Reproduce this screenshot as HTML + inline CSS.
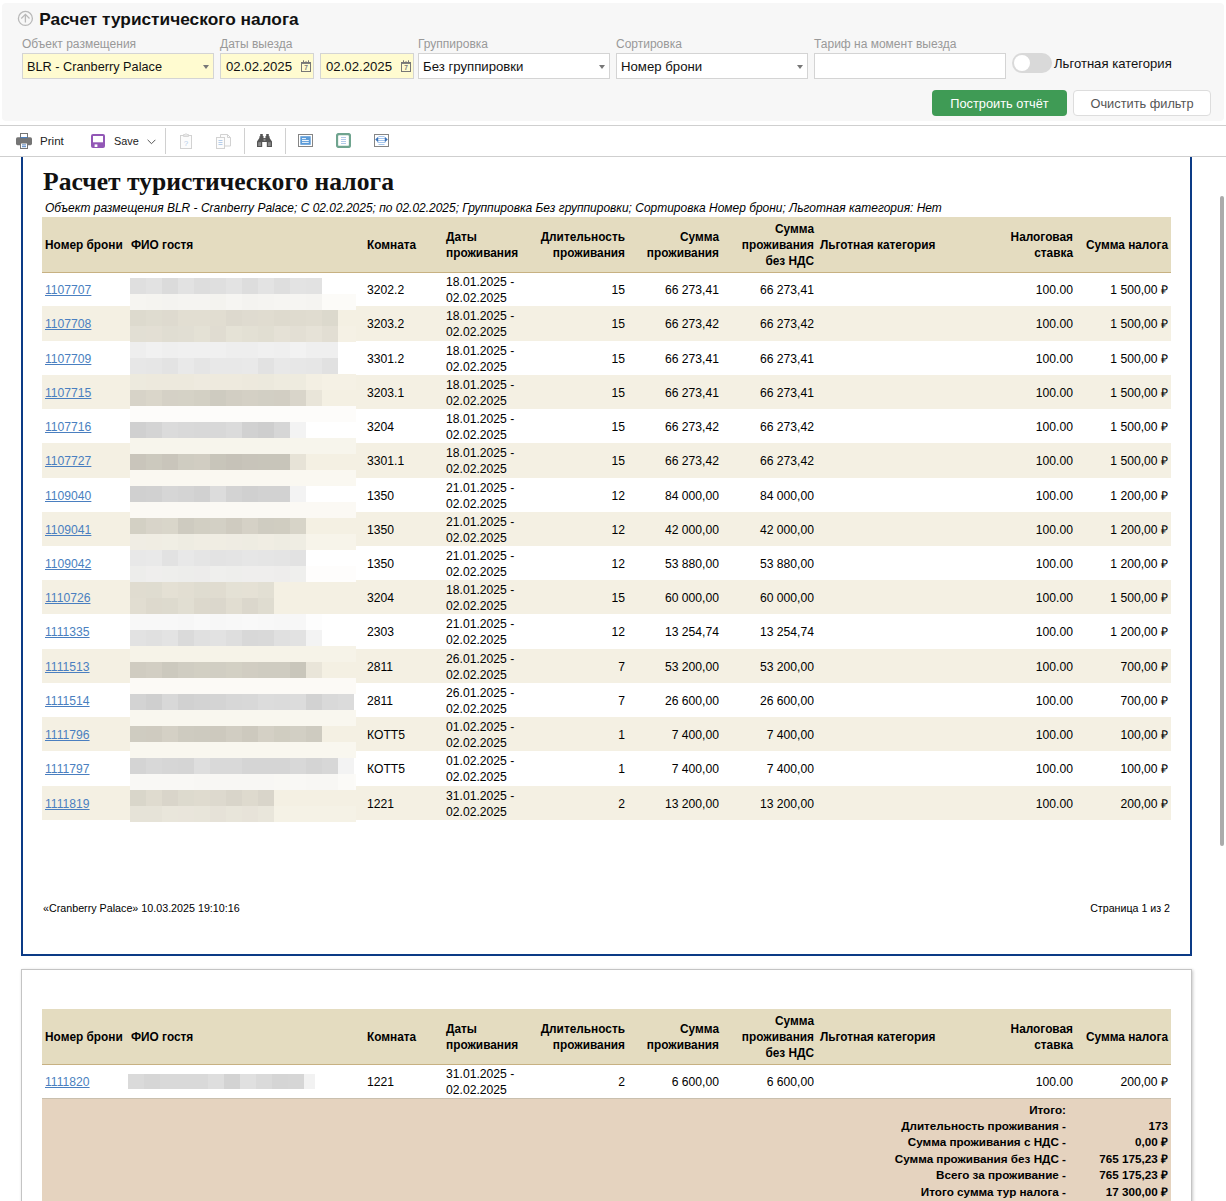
<!DOCTYPE html><html lang="ru"><head><meta charset="utf-8"><title>Расчет туристического налога</title><style>
*{box-sizing:border-box}
html,body{margin:0;padding:0}
body{width:1226px;height:1201px;overflow:hidden;background:#fff;position:relative;font-family:"Liberation Sans",sans-serif;color:#000}
.abs{position:absolute}
.panel{position:absolute;left:2px;top:3px;width:1222px;height:118px;background:#f7f7f7;border-radius:4px}
.ptitle{position:absolute;left:39.3px;top:9px;font-size:17.3px;font-weight:bold;color:#111;white-space:nowrap;line-height:20px}
.lbl{position:absolute;top:37px;font-size:12px;color:#999;white-space:nowrap;line-height:15px}
.inp{position:absolute;top:53px;height:26px;border:1px solid #d4d4d4;background:#fff;font-size:13.2px;line-height:25px;padding-left:4px;white-space:nowrap;color:#111}
.inp.y{background:#fffbd0}
.arr{position:absolute;right:4px;top:11px;width:0;height:0;border-left:3px solid transparent;border-right:3px solid transparent;border-top:4px solid #777}
.btn{position:absolute;top:90px;height:26px;border-radius:4px;font-size:12.8px;line-height:26px;text-align:center;white-space:nowrap}
.hline{position:absolute;left:0;width:1226px;height:1px;background:#cfcfcf}
.tb{position:absolute;font-size:11.6px;color:#222;top:134px;line-height:14px}
.vsep{position:absolute;top:128px;width:1px;height:26px;background:#d0d0d0}
.rep{font-family:"Liberation Sans",sans-serif;font-size:12.15px;color:#000}
.th{position:absolute;font-weight:bold;font-size:11.85px;line-height:15.7px;white-space:nowrap}
.r{text-align:right}
.cell{position:absolute;white-space:nowrap;font-size:12.15px;line-height:15.7px}
a.lnk{color:#4a7fc0;text-decoration:underline}
.tot{position:absolute;font-weight:bold;font-size:11.7px;line-height:16.4px;white-space:nowrap;text-align:right}
</style></head><body>
<div class="panel"></div>
<svg class="abs" style="left:17px;top:10px" width="17" height="17" viewBox="0 0 17 17"><circle cx="8.400" cy="8.400" r="7" fill="none" stroke="#b9b9b9" stroke-width="1.300"/><path d="M8.400 12.600V4.400M4.300 8.500L8.400 4.400l4.100 4.100" fill="none" stroke="#b9b9b9" stroke-width="1.300"/></svg>
<div class="ptitle">Расчет туристического налога</div>
<div class="lbl" style="left:22px">Объект размещения</div>
<div class="lbl" style="left:220px">Даты выезда</div>
<div class="lbl" style="left:418px">Группировка</div>
<div class="lbl" style="left:616px">Сортировка</div>
<div class="lbl" style="left:814px">Тариф на момент выезда</div>
<div class="inp y" style="left:22px;width:192px;font-size:12.72px">BLR - Cranberry Palace<i class="arr"></i></div>
<div class="inp y" style="left:220px;width:94px;padding-left:5px">02.02.2025<svg class="abs" style="right:2px;top:6px" width="10" height="12" viewBox="0 0 10 12"><rect x="0.5" y="2.500" width="9" height="9" fill="none" stroke="#777" stroke-width="1"/><path d="M0.5 3.200h9" stroke="#777" stroke-width="1.4"/><path d="M2.500 0.300v3M5 1.200v2M7.500 0.300v3" stroke="#777" stroke-width="1"/><text x="5" y="10.300" font-size="6.500" font-weight="bold" text-anchor="middle" fill="#777" font-family="Liberation Sans, sans-serif">7</text></svg></div>
<div class="inp y" style="left:320px;width:94px;padding-left:5px">02.02.2025<svg class="abs" style="right:2px;top:6px" width="10" height="12" viewBox="0 0 10 12"><rect x="0.5" y="2.500" width="9" height="9" fill="none" stroke="#777" stroke-width="1"/><path d="M0.5 3.200h9" stroke="#777" stroke-width="1.4"/><path d="M2.500 0.300v3M5 1.200v2M7.500 0.300v3" stroke="#777" stroke-width="1"/><text x="5" y="10.300" font-size="6.500" font-weight="bold" text-anchor="middle" fill="#777" font-family="Liberation Sans, sans-serif">7</text></svg></div>
<div class="inp" style="left:418px;width:192px">Без группировки<i class="arr"></i></div>
<div class="inp" style="left:616px;width:192px">Номер брони<i class="arr"></i></div>
<div class="inp" style="left:814px;width:192px"></div>
<div class="abs" style="left:1012px;top:53px;width:40px;height:20px;border-radius:10px;background:#d9d9d9"><div class="abs" style="left:2px;top:2px;width:16px;height:16px;border-radius:8px;background:#fff"></div></div>
<div class="abs" style="left:1054px;top:56px;font-size:13.1px;line-height:16px;white-space:nowrap;color:#111">Льготная категория</div>
<div class="btn" style="left:932px;width:135px;background:#3f9b55;color:#fff;line-height:27.500px">Построить отчёт</div>
<div class="btn" style="left:1073px;width:138px;background:#fff;border:1px solid #ddd;color:#555;line-height:25.500px">Очистить фильтр</div>
<div class="hline" style="top:125px"></div>
<div class="hline" style="top:156px"></div>
<svg class="abs" style="left:16px;top:133px" width="16" height="16" viewBox="0 0 16 16"><rect x="0" y="4.2" width="16" height="8" rx="1.6" fill="#757575"/><rect x="4.5" y="0.5" width="7" height="5" fill="#fff" stroke="#757575"/><path d="M4.5 4.6h7" stroke="#3b73b9" stroke-width="1"/><rect x="4.5" y="10" width="7" height="5.5" fill="#fff" stroke="#757575"/><path d="M6 11.9h4M6 13.7h4" stroke="#3b73b9" stroke-width="0.9"/></svg>
<div class="tb" style="left:40px">Print</div>
<svg class="abs" style="left:91px;top:134px" width="14" height="14" viewBox="0 0 14 14"><rect x="0" y="0" width="14" height="14" rx="2" fill="#9257b6"/><rect x="2" y="2" width="10" height="6.300" fill="#fff"/><rect x="3.6" y="10.4" width="2.8" height="2.6" fill="#fff"/></svg>
<div class="tb" style="left:114px;font-size:10.9px">Save</div>
<svg class="abs" style="left:146.5px;top:138.5px" width="9" height="6" viewBox="0 0 9 6"><path d="M0.6 0.8l3.9 3.9 3.9-3.9" fill="none" stroke="#555" stroke-width="1"/></svg>
<div class="vsep" style="left:165px"></div>
<svg class="abs" style="left:180px;top:133px" width="12" height="16" viewBox="0 0 12 16"><rect x="0.5" y="2.5" width="11" height="13" fill="#fcfcfc" stroke="#d2d2d2"/><path d="M3.5 3.5v-2h1.5l1-1 1 1h1.500v2z" fill="#e6e6e6" stroke="#d2d2d2" stroke-width="0.8"/><text x="6" y="12.6" font-size="8" text-anchor="middle" fill="#b5cdea" font-family="Liberation Sans, sans-serif">?</text></svg>
<svg class="abs" style="left:216px;top:134px" width="15" height="15" viewBox="0 0 15 15"><path d="M4.500 0.500h7l3 3v8.500h-10z" fill="#fcfcfc" stroke="#d2d2d2"/><path d="M11.500 0.500v3h3" fill="none" stroke="#d2d2d2"/><rect x="0.500" y="3.500" width="8" height="11" fill="#fcfcfc" stroke="#d2d2d2"/><path d="M2.500 6.500h4M2.500 8.500h4M2.500 10.500h4" stroke="#b5cdea"/></svg>
<div class="vsep" style="left:244px"></div>
<svg class="abs" style="left:257px;top:134px" width="15" height="13" viewBox="0 0 15 13"><path d="M3.200 0h2.600v2h0.700v2h2v-2h0.700v-2h2.600v2.200l0.800 0v1.800l2.400 3.400v5.600h-5.200v-5h-4.600v5h-5.200v-5.600l2.400-3.400v-1.800h0.800z" fill="#555"/><rect x="1.200" y="8.200" width="2.800" height="3.800" fill="#8a8a8a"/><rect x="11" y="8.200" width="2.800" height="3.800" fill="#8a8a8a"/><rect x="6.500" y="4.800" width="2" height="2" fill="#8a8a8a"/></svg>
<div class="vsep" style="left:285px"></div>
<svg class="abs" style="left:298px;top:134px" width="15" height="13" viewBox="0 0 15 13"><rect x="0.500" y="0.500" width="14" height="12" fill="#fff" stroke="#858585"/><rect x="2.300" y="2.200" width="10.400" height="8.600" fill="#5b9bd8"/><path d="M4 4.600h4M4 6.500h6.800M4 8.400h6.800" stroke="#fff" stroke-width="0.9"/></svg>
<svg class="abs" style="left:336px;top:133px" width="15" height="15" viewBox="0 0 15 15"><rect x="1" y="1" width="13" height="13" rx="2" fill="#fff" stroke="#6fa48f" stroke-width="2.3"/><path d="M5 4.500h5M5 6.500h5M5 8.500h5M5 10.500h5" stroke="#a9c4e6" stroke-width="0.9"/></svg>
<svg class="abs" style="left:374px;top:134px" width="15" height="13" viewBox="0 0 15 13"><rect x="0.500" y="0.500" width="14" height="12" fill="#fff" stroke="#858585"/><path d="M4.500 2.500h6M3.500 4.500h8M3.500 6.500h8M3.500 8.500h8M4.500 10.500h6" stroke="#9cc0ea" stroke-width="0.9"/><path d="M1.200 5.500l3-2.800v5.600zM13.800 5.500l-3-2.800v5.600z" fill="#3b73b9"/></svg>
<div class="abs" style="left:21px;top:150px;width:1171px;height:806px;border:2px solid #0c3b86;background:#fff;clip-path:inset(7px -5px -5px -5px)"></div>
<div class="abs" style="left:43px;top:166.6px;font-family:'Liberation Serif',serif;font-weight:bold;font-size:25.6px;line-height:30px;white-space:nowrap;color:#111">Расчет туристического налога</div>
<div class="abs" style="left:45px;top:201.3px;font-style:italic;font-size:11.98px;line-height:15px;white-space:nowrap">Объект размещения BLR - Cranberry Palace; С 02.02.2025; по 02.02.2025; Группировка Без группировки; Сортировка Номер брони; Льготная категория: Нет</div>
<div class="abs" style="left:42px;top:217px;width:1129px;height:55px;background:#e4dcc0"></div><div class="abs" style="left:42px;top:272px;width:1129px;height:1px;background:#c7b182"></div><div class="th" style="left:45px;top:237.8px">Номер брони</div><div class="th" style="left:131px;top:237.8px">ФИО гостя</div><div class="th" style="left:367px;top:237.8px">Комната</div><div class="th" style="left:446px;top:230.0px">Даты<br>проживания</div><div class="th r" style="right:601px;top:230.0px">Длительность<br>проживания</div><div class="th r" style="right:507px;top:230.0px">Сумма<br>проживания</div><div class="th r" style="right:412px;top:222.1px">Сумма<br>проживания<br>без НДС</div><div class="th" style="left:820px;top:237.8px">Льготная категория</div><div class="th r" style="right:153px;top:230.0px">Налоговая<br>ставка</div><div class="th r" style="right:58px;top:237.8px">Сумма налога</div>
<div class="cell" style="left:45px;top:283.00px"><a class="lnk">1107707</a></div><div class="cell" style="left:367px;top:283.00px">3202.2</div><div class="cell" style="left:446px;top:275.15px">18.01.2025 -<br>02.02.2025</div><div class="cell r" style="right:601px;top:283.00px">15</div><div class="cell r" style="right:507px;top:283.00px">66 273,41</div><div class="cell r" style="right:412px;top:283.00px">66 273,41</div><div class="cell r" style="right:153px;top:283.00px">100.00</div><div class="cell r" style="right:58px;top:283.00px">1 500,00 ₽</div>
<div class="abs" style="left:42px;top:306.42px;width:1129px;height:34.22px;background:#f4f0e3"></div><div class="cell" style="left:45px;top:317.00px"><a class="lnk">1107708</a></div><div class="cell" style="left:367px;top:317.00px">3203.2</div><div class="cell" style="left:446px;top:309.15px">18.01.2025 -<br>02.02.2025</div><div class="cell r" style="right:601px;top:317.00px">15</div><div class="cell r" style="right:507px;top:317.00px">66 273,42</div><div class="cell r" style="right:412px;top:317.00px">66 273,42</div><div class="cell r" style="right:153px;top:317.00px">100.00</div><div class="cell r" style="right:58px;top:317.00px">1 500,00 ₽</div>
<div class="cell" style="left:45px;top:352.00px"><a class="lnk">1107709</a></div><div class="cell" style="left:367px;top:352.00px">3301.2</div><div class="cell" style="left:446px;top:344.15px">18.01.2025 -<br>02.02.2025</div><div class="cell r" style="right:601px;top:352.00px">15</div><div class="cell r" style="right:507px;top:352.00px">66 273,41</div><div class="cell r" style="right:412px;top:352.00px">66 273,41</div><div class="cell r" style="right:153px;top:352.00px">100.00</div><div class="cell r" style="right:58px;top:352.00px">1 500,00 ₽</div>
<div class="abs" style="left:42px;top:374.86px;width:1129px;height:34.22px;background:#f4f0e3"></div><div class="cell" style="left:45px;top:386.00px"><a class="lnk">1107715</a></div><div class="cell" style="left:367px;top:386.00px">3203.1</div><div class="cell" style="left:446px;top:378.15px">18.01.2025 -<br>02.02.2025</div><div class="cell r" style="right:601px;top:386.00px">15</div><div class="cell r" style="right:507px;top:386.00px">66 273,41</div><div class="cell r" style="right:412px;top:386.00px">66 273,41</div><div class="cell r" style="right:153px;top:386.00px">100.00</div><div class="cell r" style="right:58px;top:386.00px">1 500,00 ₽</div>
<div class="cell" style="left:45px;top:420.00px"><a class="lnk">1107716</a></div><div class="cell" style="left:367px;top:420.00px">3204</div><div class="cell" style="left:446px;top:412.15px">18.01.2025 -<br>02.02.2025</div><div class="cell r" style="right:601px;top:420.00px">15</div><div class="cell r" style="right:507px;top:420.00px">66 273,42</div><div class="cell r" style="right:412px;top:420.00px">66 273,42</div><div class="cell r" style="right:153px;top:420.00px">100.00</div><div class="cell r" style="right:58px;top:420.00px">1 500,00 ₽</div>
<div class="abs" style="left:42px;top:443.30px;width:1129px;height:34.22px;background:#f4f0e3"></div><div class="cell" style="left:45px;top:454.00px"><a class="lnk">1107727</a></div><div class="cell" style="left:367px;top:454.00px">3301.1</div><div class="cell" style="left:446px;top:446.15px">18.01.2025 -<br>02.02.2025</div><div class="cell r" style="right:601px;top:454.00px">15</div><div class="cell r" style="right:507px;top:454.00px">66 273,42</div><div class="cell r" style="right:412px;top:454.00px">66 273,42</div><div class="cell r" style="right:153px;top:454.00px">100.00</div><div class="cell r" style="right:58px;top:454.00px">1 500,00 ₽</div>
<div class="cell" style="left:45px;top:489.00px"><a class="lnk">1109040</a></div><div class="cell" style="left:367px;top:489.00px">1350</div><div class="cell" style="left:446px;top:481.15px">21.01.2025 -<br>02.02.2025</div><div class="cell r" style="right:601px;top:489.00px">12</div><div class="cell r" style="right:507px;top:489.00px">84 000,00</div><div class="cell r" style="right:412px;top:489.00px">84 000,00</div><div class="cell r" style="right:153px;top:489.00px">100.00</div><div class="cell r" style="right:58px;top:489.00px">1 200,00 ₽</div>
<div class="abs" style="left:42px;top:511.74px;width:1129px;height:34.22px;background:#f4f0e3"></div><div class="cell" style="left:45px;top:523.00px"><a class="lnk">1109041</a></div><div class="cell" style="left:367px;top:523.00px">1350</div><div class="cell" style="left:446px;top:515.15px">21.01.2025 -<br>02.02.2025</div><div class="cell r" style="right:601px;top:523.00px">12</div><div class="cell r" style="right:507px;top:523.00px">42 000,00</div><div class="cell r" style="right:412px;top:523.00px">42 000,00</div><div class="cell r" style="right:153px;top:523.00px">100.00</div><div class="cell r" style="right:58px;top:523.00px">1 200,00 ₽</div>
<div class="cell" style="left:45px;top:557.00px"><a class="lnk">1109042</a></div><div class="cell" style="left:367px;top:557.00px">1350</div><div class="cell" style="left:446px;top:549.15px">21.01.2025 -<br>02.02.2025</div><div class="cell r" style="right:601px;top:557.00px">12</div><div class="cell r" style="right:507px;top:557.00px">53 880,00</div><div class="cell r" style="right:412px;top:557.00px">53 880,00</div><div class="cell r" style="right:153px;top:557.00px">100.00</div><div class="cell r" style="right:58px;top:557.00px">1 200,00 ₽</div>
<div class="abs" style="left:42px;top:580.18px;width:1129px;height:34.22px;background:#f4f0e3"></div><div class="cell" style="left:45px;top:591.00px"><a class="lnk">1110726</a></div><div class="cell" style="left:367px;top:591.00px">3204</div><div class="cell" style="left:446px;top:583.15px">18.01.2025 -<br>02.02.2025</div><div class="cell r" style="right:601px;top:591.00px">15</div><div class="cell r" style="right:507px;top:591.00px">60 000,00</div><div class="cell r" style="right:412px;top:591.00px">60 000,00</div><div class="cell r" style="right:153px;top:591.00px">100.00</div><div class="cell r" style="right:58px;top:591.00px">1 500,00 ₽</div>
<div class="cell" style="left:45px;top:625.00px"><a class="lnk">1111335</a></div><div class="cell" style="left:367px;top:625.00px">2303</div><div class="cell" style="left:446px;top:617.15px">21.01.2025 -<br>02.02.2025</div><div class="cell r" style="right:601px;top:625.00px">12</div><div class="cell r" style="right:507px;top:625.00px">13 254,74</div><div class="cell r" style="right:412px;top:625.00px">13 254,74</div><div class="cell r" style="right:153px;top:625.00px">100.00</div><div class="cell r" style="right:58px;top:625.00px">1 200,00 ₽</div>
<div class="abs" style="left:42px;top:648.62px;width:1129px;height:34.22px;background:#f4f0e3"></div><div class="cell" style="left:45px;top:660.00px"><a class="lnk">1111513</a></div><div class="cell" style="left:367px;top:660.00px">2811</div><div class="cell" style="left:446px;top:652.15px">26.01.2025 -<br>02.02.2025</div><div class="cell r" style="right:601px;top:660.00px">7</div><div class="cell r" style="right:507px;top:660.00px">53 200,00</div><div class="cell r" style="right:412px;top:660.00px">53 200,00</div><div class="cell r" style="right:153px;top:660.00px">100.00</div><div class="cell r" style="right:58px;top:660.00px">700,00 ₽</div>
<div class="cell" style="left:45px;top:694.00px"><a class="lnk">1111514</a></div><div class="cell" style="left:367px;top:694.00px">2811</div><div class="cell" style="left:446px;top:686.15px">26.01.2025 -<br>02.02.2025</div><div class="cell r" style="right:601px;top:694.00px">7</div><div class="cell r" style="right:507px;top:694.00px">26 600,00</div><div class="cell r" style="right:412px;top:694.00px">26 600,00</div><div class="cell r" style="right:153px;top:694.00px">100.00</div><div class="cell r" style="right:58px;top:694.00px">700,00 ₽</div>
<div class="abs" style="left:42px;top:717.06px;width:1129px;height:34.22px;background:#f4f0e3"></div><div class="cell" style="left:45px;top:728.00px"><a class="lnk">1111796</a></div><div class="cell" style="left:367px;top:728.00px">КОТТ5</div><div class="cell" style="left:446px;top:720.15px">01.02.2025 -<br>02.02.2025</div><div class="cell r" style="right:601px;top:728.00px">1</div><div class="cell r" style="right:507px;top:728.00px">7 400,00</div><div class="cell r" style="right:412px;top:728.00px">7 400,00</div><div class="cell r" style="right:153px;top:728.00px">100.00</div><div class="cell r" style="right:58px;top:728.00px">100,00 ₽</div>
<div class="cell" style="left:45px;top:762.00px"><a class="lnk">1111797</a></div><div class="cell" style="left:367px;top:762.00px">КОТТ5</div><div class="cell" style="left:446px;top:754.15px">01.02.2025 -<br>02.02.2025</div><div class="cell r" style="right:601px;top:762.00px">1</div><div class="cell r" style="right:507px;top:762.00px">7 400,00</div><div class="cell r" style="right:412px;top:762.00px">7 400,00</div><div class="cell r" style="right:153px;top:762.00px">100.00</div><div class="cell r" style="right:58px;top:762.00px">100,00 ₽</div>
<div class="abs" style="left:42px;top:785.50px;width:1129px;height:34.22px;background:#f4f0e3"></div><div class="cell" style="left:45px;top:797.00px"><a class="lnk">1111819</a></div><div class="cell" style="left:367px;top:797.00px">1221</div><div class="cell" style="left:446px;top:789.15px">31.01.2025 -<br>02.02.2025</div><div class="cell r" style="right:601px;top:797.00px">2</div><div class="cell r" style="right:507px;top:797.00px">13 200,00</div><div class="cell r" style="right:412px;top:797.00px">13 200,00</div><div class="cell r" style="right:153px;top:797.00px">100.00</div><div class="cell r" style="right:58px;top:797.00px">200,00 ₽</div>
<div class="abs" style="left:130px;top:278px;width:226px;height:16px;background:linear-gradient(90deg,#dfdfdf 0px 16px,#e2e2e2 16px 32px,#dbdbdb 32px 48px,#e2e2e2 48px 64px,#dddddd 64px 80px,#dfdfdf 80px 96px,#e3e3e3 96px 112px,#dddddd 112px 128px,#e3e3e3 128px 144px,#dedede 144px 160px,#e3e3e3 160px 176px,#e2e2e2 176px 192px,#ffffff 192px 208px,#ffffff 208px 224px,#ffffff 224px 226px)"></div>
<div class="abs" style="left:130px;top:294px;width:226px;height:16px;background:linear-gradient(90deg,#f6f5f1 0px 16px,#f5f4f0 16px 32px,#f4f3f0 32px 48px,#f5f4f1 48px 64px,#f5f4f1 64px 80px,#f4f3ef 80px 96px,#f6f5f2 96px 112px,#f4f3f0 112px 128px,#f5f4f1 128px 144px,#f6f5f2 144px 160px,#f6f5f2 160px 176px,#f5f4f1 176px 192px,#fcfbf8 192px 208px,#fcfbf8 208px 224px,#fcfbf8 224px 226px)"></div>
<div class="abs" style="left:130px;top:310px;width:226px;height:16px;background:linear-gradient(90deg,#dddace 0px 16px,#dfdcd0 16px 32px,#dedacf 32px 48px,#e2ded2 48px 64px,#e2ded2 64px 80px,#e1ddd1 80px 96px,#ddd9ce 96px 112px,#dfdbd0 112px 128px,#e0dcd0 128px 144px,#dedace 144px 160px,#dfdbcf 160px 176px,#e0dcd0 176px 192px,#dcd9cd 192px 208px,#f4f0e3 208px 224px,#f4f0e3 224px 226px)"></div>
<div class="abs" style="left:130px;top:326px;width:226px;height:16px;background:linear-gradient(90deg,#e2dfd4 0px 16px,#e3dfd4 16px 32px,#e0ddd2 32px 48px,#e1ded3 48px 64px,#e4e1d5 64px 80px,#e0dcd1 80px 96px,#e5e2d6 96px 112px,#e3e0d4 112px 128px,#e1ded2 128px 144px,#e5e1d6 144px 160px,#e3dfd4 160px 176px,#e6e2d7 176px 192px,#e2ded3 192px 208px,#f5f1e5 208px 224px,#f5f1e5 224px 226px)"></div>
<div class="abs" style="left:130px;top:342px;width:226px;height:16px;background:linear-gradient(90deg,#eeeeee 0px 16px,#f1f1f1 16px 32px,#efefef 32px 48px,#f0f0f0 48px 64px,#f0f0f0 64px 80px,#f0f0f0 80px 96px,#eeeeee 96px 112px,#eeeeee 112px 128px,#f0f0f0 128px 144px,#efefef 144px 160px,#f2f2f2 160px 176px,#efefef 176px 192px,#efefef 192px 208px,#ffffff 208px 224px,#ffffff 224px 226px)"></div>
<div class="abs" style="left:130px;top:358px;width:226px;height:16px;background:linear-gradient(90deg,#e7e7e7 0px 16px,#e6e6e6 16px 32px,#e3e3e3 32px 48px,#e9e9e9 48px 64px,#e5e5e5 64px 80px,#e8e8e8 80px 96px,#e8e8e8 96px 112px,#e9e9e9 112px 128px,#e2e2e2 128px 144px,#e8e8e8 144px 160px,#e7e7e7 160px 176px,#e6e6e6 176px 192px,#e1e1e1 192px 208px,#ffffff 208px 224px,#ffffff 224px 226px)"></div>
<div class="abs" style="left:130px;top:374px;width:226px;height:16px;background:linear-gradient(90deg,#edeade 0px 16px,#ede9dd 16px 32px,#ede9dd 32px 48px,#ede9dd 48px 64px,#eeeadf 64px 80px,#eeeade 80px 96px,#eeeade 96px 112px,#ede9dd 112px 128px,#ece9dd 128px 144px,#eeebdf 144px 160px,#eeebdf 160px 176px,#f3efe3 176px 192px,#f5f1e5 192px 208px,#f5f1e5 208px 224px,#f5f1e5 224px 226px)"></div>
<div class="abs" style="left:130px;top:390px;width:226px;height:16px;background:linear-gradient(90deg,#d7d3c8 0px 16px,#dad6ca 16px 32px,#d5d1c6 32px 48px,#d5d2c6 48px 64px,#d3d0c4 64px 80px,#cecbc0 80px 96px,#d2cec3 96px 112px,#d4d0c5 112px 128px,#d2cfc4 128px 144px,#d2cec3 144px 160px,#d9d5ca 160px 176px,#e9e5d9 176px 192px,#f4f0e3 192px 208px,#f4f0e3 208px 224px,#f4f0e3 224px 226px)"></div>
<div class="abs" style="left:130px;top:406px;width:226px;height:16px;background:linear-gradient(90deg,#fdfcfa 0px 16px,#fdfcfa 16px 32px,#fdfcfa 32px 48px,#fdfcfa 48px 64px,#fdfcfa 64px 80px,#fdfcfa 80px 96px,#fdfcfa 96px 112px,#fdfcfa 112px 128px,#fdfcfa 128px 144px,#fdfcfa 144px 160px,#fdfcfa 160px 176px,#fdfcfa 176px 192px,#fdfcfa 192px 208px,#fdfcfa 208px 224px,#fdfcfa 224px 226px)"></div>
<div class="abs" style="left:130px;top:422px;width:226px;height:16px;background:linear-gradient(90deg,#d0d0d0 0px 16px,#d4d4d4 16px 32px,#dbdbdb 32px 48px,#d9d9d9 48px 64px,#d8d8d8 64px 80px,#d8d8d8 80px 96px,#dbdbdb 96px 112px,#d1d1d1 112px 128px,#cecece 128px 144px,#d6d6d6 144px 160px,#f3f3f3 160px 176px,#ffffff 176px 192px,#ffffff 192px 208px,#ffffff 208px 224px,#ffffff 224px 226px)"></div>
<div class="abs" style="left:130px;top:438px;width:226px;height:16px;background:linear-gradient(90deg,#f7f5ec 0px 16px,#f7f5ec 16px 32px,#f7f5ec 32px 48px,#f7f5ec 48px 64px,#f7f5ec 64px 80px,#f7f5ec 80px 96px,#f7f5ec 96px 112px,#f7f5ec 112px 128px,#f7f5ec 128px 144px,#f7f5ec 144px 160px,#f7f5ec 160px 176px,#f7f5ec 176px 192px,#f7f5ec 192px 208px,#f7f5ec 208px 224px,#f7f5ec 224px 226px)"></div>
<div class="abs" style="left:130px;top:454px;width:226px;height:16px;background:linear-gradient(90deg,#c9c5bb 0px 16px,#ccc9be 16px 32px,#c9c5bb 32px 48px,#cfccc1 48px 64px,#d1cdc2 64px 80px,#c8c5ba 80px 96px,#c6c2b8 96px 112px,#c8c4ba 112px 128px,#c8c5ba 128px 144px,#c8c5ba 144px 160px,#e7e3d7 160px 176px,#f4f0e3 176px 192px,#f4f0e3 192px 208px,#f4f0e3 208px 224px,#f4f0e3 224px 226px)"></div>
<div class="abs" style="left:130px;top:470px;width:226px;height:16px;background:linear-gradient(90deg,#faf8f1 0px 16px,#faf8f1 16px 32px,#faf8f1 32px 48px,#faf8f1 48px 64px,#faf8f1 64px 80px,#faf8f1 80px 96px,#faf8f1 96px 112px,#faf8f1 112px 128px,#faf8f1 128px 144px,#faf8f1 144px 160px,#faf8f1 160px 176px,#faf8f1 176px 192px,#faf8f1 192px 208px,#faf8f1 208px 224px,#faf8f1 224px 226px)"></div>
<div class="abs" style="left:130px;top:486px;width:226px;height:16px;background:linear-gradient(90deg,#d0d0d0 0px 16px,#d1d1d1 16px 32px,#d6d6d6 32px 48px,#d4d4d4 48px 64px,#d1d1d1 64px 80px,#dcdcdc 80px 96px,#d3d3d3 96px 112px,#d0d0d0 112px 128px,#d2d2d2 128px 144px,#d2d2d2 144px 160px,#f3f3f3 160px 176px,#ffffff 176px 192px,#ffffff 192px 208px,#ffffff 208px 224px,#ffffff 224px 226px)"></div>
<div class="abs" style="left:130px;top:502px;width:226px;height:16px;background:linear-gradient(90deg,#fbf9f4 0px 16px,#fbf9f4 16px 32px,#fbf9f4 32px 48px,#fbf9f4 48px 64px,#fbf9f4 64px 80px,#fbf9f4 80px 96px,#fbf9f4 96px 112px,#fbf9f4 112px 128px,#fbf9f4 128px 144px,#fbf9f4 144px 160px,#fbf9f4 160px 176px,#fbf9f4 176px 192px,#fbf9f4 192px 208px,#fbf9f4 208px 224px,#fbf9f4 224px 226px)"></div>
<div class="abs" style="left:130px;top:518px;width:226px;height:16px;background:linear-gradient(90deg,#d3d0c4 0px 16px,#d8d4c9 16px 32px,#d9d6ca 32px 48px,#cecbc0 48px 64px,#d2cfc3 64px 80px,#d3d0c5 80px 96px,#cfcbc0 96px 112px,#d5d1c6 112px 128px,#cfccc1 128px 144px,#d0cdc1 144px 160px,#d7d4c8 160px 176px,#f4f0e3 176px 192px,#f4f0e3 192px 208px,#f4f0e3 208px 224px,#f4f0e3 224px 226px)"></div>
<div class="abs" style="left:130px;top:534px;width:226px;height:16px;background:linear-gradient(90deg,#f0ede4 0px 16px,#f0ede3 16px 32px,#f0eee4 32px 48px,#eeece2 48px 64px,#f0ede3 64px 80px,#f0ede3 80px 96px,#efece3 96px 112px,#eeece2 112px 128px,#f0ede3 128px 144px,#eeece2 144px 160px,#efede3 160px 176px,#f7f4ea 176px 192px,#f7f4ea 192px 208px,#f7f4ea 208px 224px,#f7f4ea 224px 226px)"></div>
<div class="abs" style="left:130px;top:550px;width:226px;height:16px;background:linear-gradient(90deg,#e8e8e8 0px 16px,#e9e9e9 16px 32px,#e2e2e2 32px 48px,#e8e8e8 48px 64px,#e5e5e5 64px 80px,#e3e3e3 80px 96px,#e4e4e4 96px 112px,#e6e6e6 112px 128px,#e5e5e5 128px 144px,#e4e4e4 144px 160px,#e2e2e2 160px 176px,#ffffff 176px 192px,#ffffff 192px 208px,#ffffff 208px 224px,#ffffff 224px 226px)"></div>
<div class="abs" style="left:130px;top:566px;width:226px;height:16px;background:linear-gradient(90deg,#ededeb 0px 16px,#efeeed 16px 32px,#eeeeec 32px 48px,#ededeb 48px 64px,#edeceb 64px 80px,#efefed 80px 96px,#eeeeec 96px 112px,#efeeed 112px 128px,#efeeed 128px 144px,#eeedec 144px 160px,#efefed 160px 176px,#fefdfc 176px 192px,#fefdfc 192px 208px,#fefdfc 208px 224px,#fefdfc 224px 226px)"></div>
<div class="abs" style="left:130px;top:582px;width:226px;height:16px;background:linear-gradient(90deg,#e0dcd0 0px 16px,#dfdcd0 16px 32px,#e4e0d4 32px 48px,#e2ded2 48px 64px,#dfdcd0 64px 80px,#e0dcd0 80px 96px,#e4e1d5 96px 112px,#e5e1d5 112px 128px,#e2dfd3 128px 144px,#f4f0e3 144px 160px,#f4f0e3 160px 176px,#f4f0e3 176px 192px,#f4f0e3 192px 208px,#f4f0e3 208px 224px,#f4f0e3 224px 226px)"></div>
<div class="abs" style="left:130px;top:598px;width:226px;height:16px;background:linear-gradient(90deg,#e1ddd1 0px 16px,#ddd9cd 16px 32px,#dddace 32px 48px,#e1ded2 48px 64px,#dcd8cc 64px 80px,#dbd7cc 80px 96px,#e1ddd1 96px 112px,#dbd7cc 112px 128px,#dfdcd0 128px 144px,#f4f0e3 144px 160px,#f4f0e3 160px 176px,#f4f0e3 176px 192px,#f4f0e3 192px 208px,#f4f0e3 208px 224px,#f4f0e3 224px 226px)"></div>
<div class="abs" style="left:130px;top:614px;width:226px;height:16px;background:linear-gradient(90deg,#f8f8f8 0px 16px,#f8f8f8 16px 32px,#f8f8f8 32px 48px,#f7f7f7 48px 64px,#f9f9f9 64px 80px,#f7f7f7 80px 96px,#f8f8f8 96px 112px,#f9f9f9 112px 128px,#f8f8f8 128px 144px,#f7f7f7 144px 160px,#f7f7f7 160px 176px,#fdfdfd 176px 192px,#ffffff 192px 208px,#ffffff 208px 224px,#ffffff 224px 226px)"></div>
<div class="abs" style="left:130px;top:630px;width:226px;height:16px;background:linear-gradient(90deg,#e2e2e2 0px 16px,#e0e0e0 16px 32px,#e3e3e3 32px 48px,#dadada 48px 64px,#e0e0e0 64px 80px,#e2e2e2 80px 96px,#dedede 96px 112px,#d8d8d8 112px 128px,#d9d9d9 128px 144px,#e0e0e0 144px 160px,#e2e2e2 160px 176px,#f3f3f3 176px 192px,#ffffff 192px 208px,#ffffff 208px 224px,#ffffff 224px 226px)"></div>
<div class="abs" style="left:130px;top:646px;width:226px;height:16px;background:linear-gradient(90deg,#f6f3e8 0px 16px,#f6f3e8 16px 32px,#f6f3e8 32px 48px,#f6f3e8 48px 64px,#f6f3e8 64px 80px,#f6f3e8 80px 96px,#f6f3e8 96px 112px,#f6f3e8 112px 128px,#f6f3e8 128px 144px,#f6f3e8 144px 160px,#f6f3e8 160px 176px,#f6f3e8 176px 192px,#f6f3e8 192px 208px,#f6f3e8 208px 224px,#f6f3e8 224px 226px)"></div>
<div class="abs" style="left:130px;top:662px;width:226px;height:16px;background:linear-gradient(90deg,#d0ccc1 0px 16px,#d2cec3 16px 32px,#ccc9be 32px 48px,#d0cdc2 48px 64px,#d2cfc3 64px 80px,#d1cec3 80px 96px,#d3d0c4 96px 112px,#d1cdc2 112px 128px,#cfccc1 128px 144px,#cfccc1 144px 160px,#c9c6bb 160px 176px,#e9e5d9 176px 192px,#f4f0e3 192px 208px,#f4f0e3 208px 224px,#f4f0e3 224px 226px)"></div>
<div class="abs" style="left:130px;top:678px;width:226px;height:16px;background:linear-gradient(90deg,#fcfaf6 0px 16px,#fcfaf6 16px 32px,#fcfaf6 32px 48px,#fcfaf6 48px 64px,#fcfaf6 64px 80px,#fcfaf6 80px 96px,#fcfaf6 96px 112px,#fcfaf6 112px 128px,#fcfaf6 128px 144px,#fcfaf6 144px 160px,#fcfaf6 160px 176px,#fcfaf6 176px 192px,#fcfaf6 192px 208px,#fcfaf6 208px 224px,#fcfaf6 224px 226px)"></div>
<div class="abs" style="left:130px;top:694px;width:226px;height:16px;background:linear-gradient(90deg,#d3d3d3 0px 16px,#cfcfcf 16px 32px,#d8d8d8 32px 48px,#d1d1d1 48px 64px,#d3d3d3 64px 80px,#d4d4d4 80px 96px,#d7d7d7 96px 112px,#d8d8d8 112px 128px,#dcdcdc 128px 144px,#dbdbdb 144px 160px,#dcdcdc 160px 176px,#d2d2d2 176px 192px,#d9d9d9 192px 208px,#dbdbdb 208px 224px,#ffffff 224px 226px)"></div>
<div class="abs" style="left:130px;top:710px;width:226px;height:16px;background:linear-gradient(90deg,#f9f7ef 0px 16px,#f9f7ef 16px 32px,#f9f7ef 32px 48px,#f9f7ef 48px 64px,#f9f7ef 64px 80px,#f9f7ef 80px 96px,#f9f7ef 96px 112px,#f9f7ef 112px 128px,#f9f7ef 128px 144px,#f9f7ef 144px 160px,#f9f7ef 160px 176px,#f9f7ef 176px 192px,#f9f7ef 192px 208px,#f9f7ef 208px 224px,#f9f7ef 224px 226px)"></div>
<div class="abs" style="left:130px;top:726px;width:226px;height:16px;background:linear-gradient(90deg,#cfccc1 0px 16px,#cfcbc0 16px 32px,#d4d0c5 32px 48px,#cecbc0 48px 64px,#cdcabf 64px 80px,#cdc9be 80px 96px,#d1cdc2 96px 112px,#cdc9be 112px 128px,#d4d0c5 128px 144px,#d0cdc1 144px 160px,#d2cfc4 160px 176px,#cecbc0 176px 192px,#f4f0e3 192px 208px,#f4f0e3 208px 224px,#f4f0e3 224px 226px)"></div>
<div class="abs" style="left:130px;top:742px;width:226px;height:16px;background:linear-gradient(90deg,#f9f7ef 0px 16px,#f9f7ef 16px 32px,#f9f7ef 32px 48px,#f9f7ef 48px 64px,#f9f7ef 64px 80px,#f9f7ef 80px 96px,#f9f7ef 96px 112px,#f9f7ef 112px 128px,#f9f7ef 128px 144px,#f9f7ef 144px 160px,#f9f7ef 160px 176px,#f9f7ef 176px 192px,#f9f7ef 192px 208px,#f9f7ef 208px 224px,#f9f7ef 224px 226px)"></div>
<div class="abs" style="left:130px;top:758px;width:226px;height:16px;background:linear-gradient(90deg,#d4d4d4 0px 16px,#d8d8d8 16px 32px,#d6d6d6 32px 48px,#d5d5d5 48px 64px,#dedede 64px 80px,#d9d9d9 80px 96px,#d9d9d9 96px 112px,#d5d5d5 112px 128px,#d5d5d5 128px 144px,#d5d5d5 144px 160px,#d8d8d8 160px 176px,#d4d4d4 176px 192px,#d7d7d7 192px 208px,#f3f3f3 208px 224px,#ffffff 224px 226px)"></div>
<div class="abs" style="left:130px;top:774px;width:226px;height:16px;background:linear-gradient(90deg,#f9f8f5 0px 16px,#f9f8f5 16px 32px,#f9f8f5 32px 48px,#f9f8f5 48px 64px,#f8f7f4 64px 80px,#f8f7f4 80px 96px,#f8f7f4 96px 112px,#f8f7f4 112px 128px,#f8f7f4 128px 144px,#f9f8f4 144px 160px,#f9f8f5 160px 176px,#f8f7f4 176px 192px,#f8f7f4 192px 208px,#fbfaf7 208px 224px,#fcfbf8 224px 226px)"></div>
<div class="abs" style="left:130px;top:790px;width:226px;height:16px;background:linear-gradient(90deg,#d9d6ca 0px 16px,#dfdbcf 16px 32px,#d9d5ca 32px 48px,#dddace 48px 64px,#dfdbcf 64px 80px,#ddd9ce 80px 96px,#d9d5ca 96px 112px,#dedace 112px 128px,#d9d5ca 128px 144px,#f4f0e3 144px 160px,#f4f0e3 160px 176px,#f4f0e3 176px 192px,#f4f0e3 192px 208px,#f4f0e3 208px 224px,#f4f0e3 224px 226px)"></div>
<div class="abs" style="left:130px;top:806px;width:226px;height:16px;background:linear-gradient(90deg,#e6e3d8 0px 16px,#e6e3d8 16px 32px,#e9e6db 32px 48px,#e9e5db 48px 64px,#e8e5da 64px 80px,#e6e2d8 80px 96px,#e8e5da 96px 112px,#e7e3d9 112px 128px,#e9e6db 128px 144px,#f5f2e6 144px 160px,#f5f2e6 160px 176px,#f5f2e6 176px 192px,#f5f2e6 192px 208px,#f5f2e6 208px 224px,#f5f2e6 224px 226px)"></div>
<div class="abs" style="left:43px;top:901px;font-size:10.72px;line-height:14px;white-space:nowrap">«Cranberry Palace» 10.03.2025 19:10:16</div>
<div class="abs r" style="right:56px;top:901px;font-size:10.67px;line-height:14px;white-space:nowrap">Страница 1 из 2</div>
<div class="abs" style="left:21px;top:969px;width:1171px;height:260px;border:1px solid #c4c4c4;background:#fff;box-shadow:1px 1px 3px rgba(0,0,0,.22)"></div>
<div class="abs" style="left:42px;top:1009px;width:1129px;height:55px;background:#e4dcc0"></div><div class="abs" style="left:42px;top:1064px;width:1129px;height:1px;background:#c7b182"></div><div class="th" style="left:45px;top:1029.9px">Номер брони</div><div class="th" style="left:131px;top:1029.9px">ФИО гостя</div><div class="th" style="left:367px;top:1029.9px">Комната</div><div class="th" style="left:446px;top:1022.0px">Даты<br>проживания</div><div class="th r" style="right:601px;top:1022.0px">Длительность<br>проживания</div><div class="th r" style="right:507px;top:1022.0px">Сумма<br>проживания</div><div class="th r" style="right:412px;top:1014.2px">Сумма<br>проживания<br>без НДС</div><div class="th" style="left:820px;top:1029.9px">Льготная категория</div><div class="th r" style="right:153px;top:1022.0px">Налоговая<br>ставка</div><div class="th r" style="right:58px;top:1029.9px">Сумма налога</div>
<div class="cell" style="left:45px;top:1075.00px"><a class="lnk">1111820</a></div><div class="cell" style="left:367px;top:1075.00px">1221</div><div class="cell" style="left:446px;top:1067.15px">31.01.2025 -<br>02.02.2025</div><div class="cell r" style="right:601px;top:1075.00px">2</div><div class="cell r" style="right:507px;top:1075.00px">6 600,00</div><div class="cell r" style="right:412px;top:1075.00px">6 600,00</div><div class="cell r" style="right:153px;top:1075.00px">100.00</div><div class="cell r" style="right:58px;top:1075.00px">200,00 ₽</div>
<div class="abs" style="left:128px;top:1074px;width:187px;height:15px;background:linear-gradient(90deg,#dadada 0px 16px,#d6d6d6 16px 32px,#d9d9d9 32px 48px,#d9d9d9 48px 64px,#d9d9d9 64px 80px,#dedede 80px 96px,#d3d3d3 96px 112px,#e0e0e0 112px 128px,#dadada 128px 144px,#d5d5d5 144px 160px,#d6d6d6 160px 176px,#f2f2f2 176px 187px)"></div>
<div class="abs" style="left:42px;top:1098px;width:1129px;height:1px;background:#c9bfae"></div>
<div class="abs" style="left:42px;top:1099px;width:1129px;height:110px;background:#e5d3bf"></div>
<div class="tot" style="right:160px;top:1101.5px">Итого:</div>
<div class="tot" style="right:160px;top:1117.9px">Длительность проживания -</div>
<div class="tot" style="right:58px;top:1117.9px">173</div>
<div class="tot" style="right:160px;top:1134.3px">Сумма проживания с НДС -</div>
<div class="tot" style="right:58px;top:1134.3px">0,00 ₽</div>
<div class="tot" style="right:160px;top:1150.7px">Сумма проживания без НДС -</div>
<div class="tot" style="right:58px;top:1150.7px">765 175,23 ₽</div>
<div class="tot" style="right:160px;top:1167.1px">Всего за проживание -</div>
<div class="tot" style="right:58px;top:1167.1px">765 175,23 ₽</div>
<div class="tot" style="right:160px;top:1183.5px">Итого сумма тур налога -</div>
<div class="tot" style="right:58px;top:1183.5px">17 300,00 ₽</div>
<div class="abs" style="left:1220px;top:196px;width:4px;height:650px;border-radius:2px;background:#ababab"></div>
</body></html>
